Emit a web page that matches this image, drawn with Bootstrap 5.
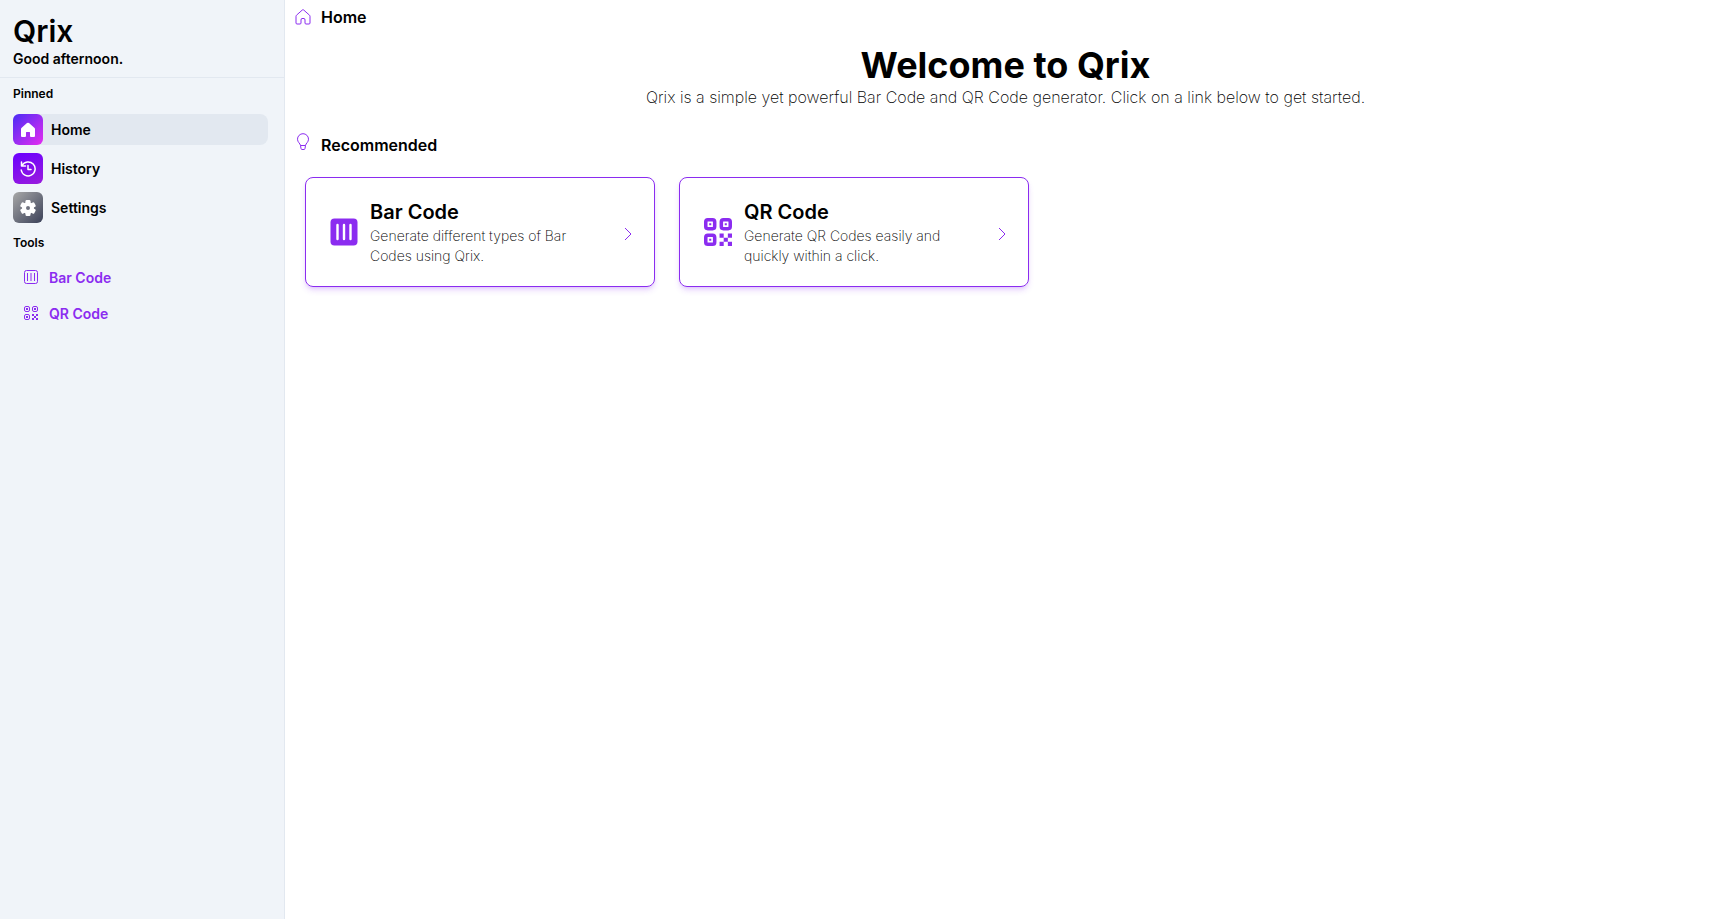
<!DOCTYPE html>
<html lang="en">
<head>
<meta charset="utf-8">
<meta name="viewport" content="width=device-width, initial-scale=1">
<title>Qrix</title>
<link href="https://cdn.jsdelivr.net/npm/bootstrap@5.3.0/dist/css/bootstrap.min.css" rel="stylesheet">
<style>
  :root { --violet: #8b2cf0; --line: #e2e8f0; }
  body { font-family: Inter, "Open Sans", sans-serif; color: #000; background: #fff; }
  a { text-decoration: none; color: #000; }
  svg { display: block; flex: none; }
  .side { width: 285px; background: #f0f4f9; border-right: 1px solid var(--line); }
  .side-head { padding: 13px 13px 8px; border-bottom: 1px solid var(--line); }
  .brand { font-size: 30px; line-height: 36px; font-weight: 600; }
  .greet { font-size: 14px; line-height: 20px; font-weight: 600; }
  .side-body { padding: 8px 16px 0 13px; }
  .group-label { font-size: 12px; line-height: 16px; font-weight: 600; }
  .pin { height: 31px; border-radius: 8px; font-size: 14px; font-weight: 600; }
  .pin.active { background: var(--line); }
  .tile { width: 30px; height: 31px; border-radius: 6px; color: #fff; }
  .tile-home { background: linear-gradient(135deg, #4a2cf5, #e62cf0); }
  .tile-history { background: linear-gradient(160deg, #6a00ff, #9a1cdc); }
  .tile-settings { background: linear-gradient(135deg, #a8a8a8, #3a4058); }
  .tool { height: 36px; padding-left: 11px; gap: 11px; font-size: 14px; font-weight: 600; color: var(--violet); }
  .content { padding: 5px 4px 0 10px; }
  .crumb { font-size: 16px; line-height: 24px; font-weight: 600; gap: 10px; }
  .crumb svg, .go { color: var(--violet); }
  .hero h1 { font-size: 36px; line-height: 40px; font-weight: 700; }
  .hero p { font-size: 16px; line-height: 24px; font-weight: 200; }
  .cards { padding: 20px 10px; }
  .tool-card { width: 350px; min-height: 110px; padding: 20px 22px 20px 24px; border: 1px solid var(--violet); border-radius: 8px; box-shadow: 0 4px 6px -1px #8b2cf033, 0 2px 4px -2px #8b2cf033; }
  .tool-card h3 { font-size: 20px; line-height: 28px; font-weight: 600; }
  .tool-card p { font-size: 14px; line-height: 20px; font-weight: 200; }
  .tool-card > svg { color: var(--violet); }
  .blurb { width: 220px; margin-left: 12px; }
</style>
</head>
<body>
<svg width="0" height="0" class="position-absolute" aria-hidden="true">
  <symbol id="qr-thin" viewBox="0 0 14 14">
    <g fill="none" stroke="currentColor"><rect x=".5" y=".5" width="5" height="5" rx="1.5"/><rect x="8.5" y=".5" width="5" height="5" rx="1.5"/><rect x=".5" y="8.5" width="5" height="5" rx="1.5"/></g>
    <path fill="currentColor" d="M2 2h2v2H2zM10 2h2v2h-2zM2 10h2v2H2zM8 8h2v2H8zM12 8h2v2h-2zM10 10h2v2h-2zM8 12h2v2H8zM12 12h2v2h-2z"/>
  </symbol>
  <symbol id="qr-bold" viewBox="0 0 27 27">
    <g fill="none" stroke="currentColor" stroke-width="3.4"><rect x="1.7" y="1.7" width="8.6" height="8.6" rx="2"/><rect x="16.7" y="1.7" width="8.6" height="8.6" rx="2"/><rect x="1.7" y="16.7" width="8.6" height="8.6" rx="2"/></g>
    <path fill="currentColor" d="M5 5h2v2H5zM20 5h2v2h-2zM5 20h2v2H5zM15 15h4v4h-4zM23 15h4v4h-4zM19 19h4v4h-4zM15 23h4v4h-4zM23 23h4v4h-4z"/>
  </symbol>
  <symbol id="chevron" viewBox="0 0 8 14"><path d="M1 1l6 6-6 6" fill="none" stroke="currentColor"/></symbol>
</svg>
<div class="d-flex min-vh-100">
  <aside class="side flex-shrink-0">
    <header class="side-head">
      <div class="brand">Qrix</div>
      <div class="greet">Good afternoon.</div>
    </header>
    <nav class="side-body">
      <div class="group-label mb-2 pb-1">Pinned</div>
      <div class="d-flex flex-column gap-2">
        <a href="#" class="pin active d-flex align-items-center gap-2" aria-current="page">
          <span class="tile tile-home d-flex align-items-center justify-content-center"><svg width="16" height="16" viewBox="0 0 16 16"><path fill="currentColor" d="M7 1.1a1.5 1.5 0 0 1 2 0l5.3 4.7c.4.3.7.8.7 1.4V14a1 1 0 0 1-1 1h-3a1 1 0 0 1-1-1v-3.500a.5.5 0 0 0-.5-.5h-3a.5.5 0 0 0-.5.5V14a1 1 0 0 1-1 1H2a1 1 0 0 1-1-1V7.200c0-.6.3-1.100.7-1.400z"/></svg></span>
          Home</a>
        <a href="#" class="pin d-flex align-items-center gap-2">
          <span class="tile tile-history d-flex align-items-center justify-content-center"><svg width="16" height="16" viewBox="0 0 16 16" fill="none" stroke="currentColor" stroke-width="1.5" stroke-linecap="round" stroke-linejoin="round"><path d="M2 4.500A7 7 0 1 1 1.200 9M1.500 1v4h4M8 4.500v4h3"/></svg></span>
          History</a>
        <a href="#" class="pin d-flex align-items-center gap-2">
          <span class="tile tile-settings d-flex align-items-center justify-content-center"><svg width="18" height="18" viewBox="0 0 18 18"><g fill="currentColor"><path fill-rule="evenodd" d="M9 3a6 6 0 1 0 0 12A6 6 0 0 0 9 3m0 4a2 2 0 1 1 0 4 2 2 0 0 1 0-4"/><rect x="6.5" y="1" width="5" height="4" rx="1.2"/><rect x="6.5" y="1" width="5" height="4" rx="1.2" transform="rotate(60 9 9)"/><rect x="6.5" y="1" width="5" height="4" rx="1.2" transform="rotate(120 9 9)"/><rect x="6.5" y="1" width="5" height="4" rx="1.2" transform="rotate(180 9 9)"/><rect x="6.5" y="1" width="5" height="4" rx="1.2" transform="rotate(240 9 9)"/><rect x="6.5" y="1" width="5" height="4" rx="1.2" transform="rotate(300 9 9)"/></g></svg></span>
          Settings</a>
      </div>
      <div class="group-label mt-2 pt-1 mb-2">Tools</div>
      <a href="#" class="tool d-flex align-items-center"><svg width="14" height="14" viewBox="0 0 14 14" fill="none" stroke="currentColor"><rect x=".5" y=".5" width="13" height="13" rx="2"/><path d="M3.5 3v8M10.5 3v8"/><path d="M7 3v8" stroke-width="2" opacity=".5"/></svg>Bar Code</a>
      <a href="#" class="tool d-flex align-items-center"><svg width="14" height="14"><use href="#qr-thin"/></svg>QR Code</a>
    </nav>
  </aside>
  <main class="content flex-grow-1">
    <h2 class="crumb d-flex align-items-center mb-3"><svg width="16" height="16" viewBox="0 0 16 16" fill="none" stroke="currentColor" stroke-linejoin="round"><path d="M7.300 1Q8 .4 8.700 1l5.800 5.200q.5.500.5 1.100V14q0 1-1 1h-3q-1 0-1-1v-3q0-1.500-1-1.500H7q-1 0-1 1.500v3q0 1-1 1H2q-1 0-1-1V7.300q0-.6.500-1.100z"/></svg>Home</h2>
    <section class="hero text-center">
      <h1 class="mb-0">Welcome to Qrix</h1>
      <p class="mb-4">Qrix is a simple yet powerful Bar Code and QR Code generator. Click on a link below to get started.</p>
    </section>
    <h2 class="crumb d-flex mb-0"><svg width="16" height="18" viewBox="0 0 16 18" fill="none" stroke="currentColor" stroke-linejoin="round"><path d="M5.500 12.500C5.200 10.300 2.500 9.300 2.500 6.200a5.500 5.500 0 0 1 11 0c0 3.100-2.700 4.100-3 6.300zM5.500 12.500l.5 3q.2 1 1 1h2q.8 0 1-1l.5-3"/></svg><span>Recommended</span></h2>
    <div class="cards d-flex flex-wrap gap-4">
      <a href="#" class="tool-card d-flex align-items-center">
        <svg width="28" height="28" viewBox="0 0 28 28"><rect x=".5" y=".5" width="27" height="27" rx="4" fill="currentColor"/><path d="M7.500 7v14M14 7v14M20.500 7v14" stroke="#fff" stroke-width="2.400" stroke-linecap="round"/></svg>
        <div class="blurb"><h3 class="mb-0">Bar Code</h3><p class="mb-0">Generate different types of Bar Codes using Qrix.</p></div>
        <svg class="go ms-auto mt-1" width="8" height="14"><use href="#chevron"/></svg>
      </a>
      <a href="#" class="tool-card d-flex align-items-center">
        <svg width="28" height="28"><use href="#qr-bold"/></svg>
        <div class="blurb"><h3 class="mb-0">QR Code</h3><p class="mb-0">Generate QR Codes easily and quickly within a click.</p></div>
        <svg class="go ms-auto mt-1" width="8" height="14"><use href="#chevron"/></svg>
      </a>
    </div>
  </main>
</div>
<script src="https://cdn.jsdelivr.net/npm/bootstrap@5.3.0/dist/js/bootstrap.bundle.min.js"></script>
</body>
</html>
